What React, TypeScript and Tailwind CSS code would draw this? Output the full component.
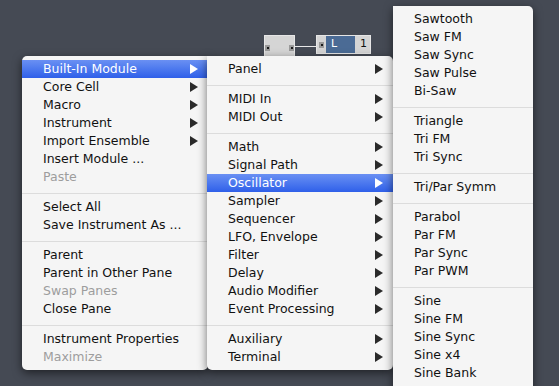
import React from 'react';

type Item = { label: string; sub?: boolean; disabled?: boolean; active?: boolean } | 'sep';

const moduleMenu: Item[] = [
  { label: 'Built-In Module', sub: true, active: true },
  { label: 'Core Cell', sub: true },
  { label: 'Macro', sub: true },
  { label: 'Instrument', sub: true },
  { label: 'Import Ensemble', sub: true },
  { label: 'Insert Module ...' },
  { label: 'Paste', disabled: true },
  'sep',
  { label: 'Select All' },
  { label: 'Save Instrument As ...' },
  'sep',
  { label: 'Parent' },
  { label: 'Parent in Other Pane' },
  { label: 'Swap Panes', disabled: true },
  { label: 'Close Pane' },
  'sep',
  { label: 'Instrument Properties' },
  { label: 'Maximize', disabled: true },
];

const builtInMenu: Item[] = [
  { label: 'Panel', sub: true },
  'sep',
  { label: 'MIDI In', sub: true },
  { label: 'MIDI Out', sub: true },
  'sep',
  { label: 'Math', sub: true },
  { label: 'Signal Path', sub: true },
  { label: 'Oscillator', sub: true, active: true },
  { label: 'Sampler', sub: true },
  { label: 'Sequencer', sub: true },
  { label: 'LFO, Envelope', sub: true },
  { label: 'Filter', sub: true },
  { label: 'Delay', sub: true },
  { label: 'Audio Modifier', sub: true },
  { label: 'Event Processing', sub: true },
  'sep',
  { label: 'Auxiliary', sub: true },
  { label: 'Terminal', sub: true },
];

const oscMenu: Item[] = [
  { label: 'Sawtooth' },
  { label: 'Saw FM' },
  { label: 'Saw Sync' },
  { label: 'Saw Pulse' },
  { label: 'Bi-Saw' },
  'sep',
  { label: 'Triangle' },
  { label: 'Tri FM' },
  { label: 'Tri Sync' },
  'sep',
  { label: 'Tri/Par Symm' },
  'sep',
  { label: 'Parabol' },
  { label: 'Par FM' },
  { label: 'Par Sync' },
  { label: 'Par PWM' },
  'sep',
  { label: 'Sine' },
  { label: 'Sine FM' },
  { label: 'Sine Sync' },
  { label: 'Sine x4' },
  { label: 'Sine Bank' },
];

const Arrow: React.FC<{ white?: boolean }> = ({ white }) => (
  <svg width="8" height="10" viewBox="0 0 8 10" className="shrink-0">
    <path d="M0 0 L8 5 L0 10 Z" fill={white ? '#ffffff' : '#2a2a2a'} />
  </svg>
);

const Menu: React.FC<{ items: Item[]; className: string }> = ({ items, className }) => (
  <div
    className={`absolute flex flex-col bg-[#f5f5f5] pt-[4px] pb-[4px] shadow-[0_3px_10px_rgba(0,0,0,0.55)] ${className}`}
  >
    {items.map((item, index) =>
      item === 'sep' ? (
        <div key={index} className="h-[12px] pt-[7px]">
          <div className="h-px bg-[#dcdcdc]" />
        </div>
      ) : (
        <div
          key={index}
          className={`flex h-[18px] items-center justify-between pl-[21px] pr-[10px] ${
            item.active ? 'bg-linear-to-b from-[#6a90f3] to-[#2f5fe9] text-white' : item.disabled ? 'text-[#9d9d9d]' : 'text-[#111]'
          }`}
        >
          <span className="leading-[18px] whitespace-nowrap">{item.label}</span>
          {item.sub && <Arrow white={item.active} />}
        </div>
      )
    )}
  </div>
);

const Port: React.FC = () => (
  <div className="flex h-[6px] w-[5px] items-center justify-center bg-[#9a9a9a]">
    <div className="h-[2px] w-[2px] bg-[#1a1a1a]" />
  </div>
);

export default function App() {
  return (
    <div
      className="relative h-[386px] w-[559px] overflow-hidden bg-[#454a54] text-[12.5px]"
      style={{ fontFamily: '"DejaVu Sans", "Lucida Grande", sans-serif' }}
    >
      {/* modules on the canvas */}
      <div className="absolute left-[264px] top-[35px] flex h-[30px] w-[31px] items-start justify-between border border-[#e6e6e6] bg-[#d5d5d5] pt-[9px]">
        <Port />
        <Port />
      </div>
      <div className="absolute left-[295px] top-[46px] h-px w-[22px] bg-[#e8e8e8]" />
      <div className="absolute left-[316px] top-[35px] flex h-[19px] w-[55px] items-center border border-[#e6e6e6] bg-[#d5d5d5] text-[11px]">
        <div className="flex w-[9px] justify-center">
          <Port />
        </div>
        <div className="flex h-full w-[29px] items-center bg-[#4b6b95] pl-[5px] text-white">L</div>
        <div className="flex flex-1 justify-end pr-[3px] text-[#111]">1</div>
      </div>

      <Menu items={moduleMenu} className="left-[22px] top-[56px] w-[186px] rounded-tl-[5px] rounded-b-[5px]" />
      <Menu items={builtInMenu} className="left-[207px] top-[56px] w-[186px] rounded-tr-[5px] rounded-b-[5px]" />
      <Menu items={oscMenu} className="left-[393px] top-[6px] h-[400px] w-[140px] rounded-tr-[5px]" />
    </div>
  );
}
